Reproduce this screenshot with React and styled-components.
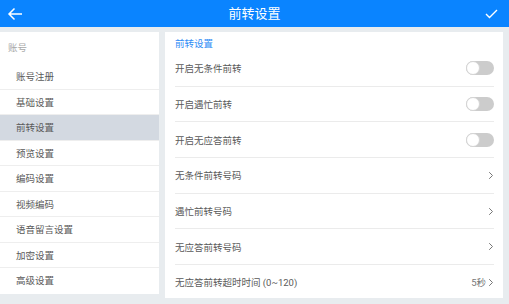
import React from "react"
import styled, { createGlobalStyle } from "styled-components"

const GlobalStyle = createGlobalStyle`
  html, body {
    margin: 0;
    padding: 0;
    background: #e8ecef;
    font-family: Roboto, "Noto Sans CJK SC", "Noto Sans", sans-serif;
  }
`

const Page = styled.div`
  width: 509px;
  height: 304px;
  display: flex;
  flex-direction: column;
  background: #e8ecef;
  overflow: hidden;
`

const TopBar = styled.div`
  height: 27px;
  flex: none;
  background: #0a84ff;
  display: flex;
  align-items: center;
  justify-content: space-between;
  padding: 0 11px 0 7px;
  color: #fff;
  position: relative;
`

const Title = styled.div`
  position: absolute;
  left: 0;
  right: 0;
  text-align: center;
  font-size: 13px;
  line-height: 27px;
  pointer-events: none;
`

const Body = styled.div`
  display: flex;
  gap: 6px;
  padding: 5px 6px 0 0;
  align-items: flex-start;
`

const Sidebar = styled.div`
  width: 159px;
  height: 261.5px;
  background: #fff;
  flex: none;
`

const GroupLabel = styled.div`
  height: 32px;
  line-height: 32px;
  padding-left: 8px;
  font-size: 9.5px;
  color: #a8a8a8;
`

const NavItem = styled.div`
  height: 25.5px;
  box-sizing: border-box;
  border-bottom: 1px solid ${(p) => (p.$last ? "transparent" : "#eeeeee")};
  background: ${(p) => (p.$active ? "#d3d9e1" : "#fff")};
  padding-left: 16px;
  display: flex;
  align-items: center;
  font-size: 9.5px;
  color: #5a5a5a;
`

const Panel = styled.div`
  flex: 1;
  height: 266px;
  background: #fff;
  padding: 0 9px 0 10px;
  overflow: hidden;
`

const SectionTitle = styled.div`
  height: 19px;
  padding-top: 6px;
  box-sizing: border-box;
  font-size: 9.5px;
  line-height: 12px;
  color: #2f8cf5;
`

const Row = styled.div`
  height: 35.7px;
  box-sizing: border-box;
  border-bottom: 1px solid ${(p) => (p.$last ? "transparent" : "#ebebeb")};
  display: flex;
  align-items: center;
  justify-content: space-between;
  font-size: 9.5px;
  color: #5a5a5a;
`

const RowEnd = styled.div`
  display: flex;
  align-items: center;
  gap: 2px;
  color: #777;
  font-size: 9.5px;
`

const Toggle = styled.div`
  width: 28px;
  height: 14px;
  border-radius: 7px;
  background: #cccccc;
  position: relative;
  &::after {
    content: "";
    position: absolute;
    left: 0;
    top: 0;
    width: 14px;
    height: 14px;
    box-sizing: border-box;
    border-radius: 50%;
    background: #fff;
    border: 1px solid #d4d4d4;
  }
`

const Chevron = () => (
  <svg width="6" height="9" viewBox="0 0 6 9">
    <path d="M1.2 1.2 L4.5 4.5 L1.2 7.8" fill="none" stroke="#777" strokeWidth="1" />
  </svg>
)

const navItems = [
  "账号注册",
  "基础设置",
  "前转设置",
  "预览设置",
  "编码设置",
  "视频编码",
  "语音留言设置",
  "加密设置",
  "高级设置",
]

const rows = [
  { label: "开启无条件前转", type: "toggle" },
  { label: "开启遇忙前转", type: "toggle" },
  { label: "开启无应答前转", type: "toggle" },
  { label: "无条件前转号码", type: "link" },
  { label: "遇忙前转号码", type: "link" },
  { label: "无应答前转号码", type: "link" },
  { label: "无应答前转超时时间 (0~120)", type: "link", value: "5秒" },
]

export default function App() {
  return (
    <>
      <GlobalStyle />
      <Page>
        <TopBar>
          <svg width="16" height="14" viewBox="0 0 16 14">
            <path d="M15 7 H2 M7.5 1.5 L2 7 L7.5 12.5" fill="none" stroke="#fff" strokeWidth="1.5" />
          </svg>
          <Title>前转设置</Title>
          <svg width="13" height="10" viewBox="0 0 13 10">
            <path d="M1 5 L4.5 8.5 L12 1" fill="none" stroke="#fff" strokeWidth="1.4" />
          </svg>
        </TopBar>
        <Body>
          <Sidebar>
            <GroupLabel>账号</GroupLabel>
            {navItems.map((name, i) => (
              <NavItem key={name} $active={name === "前转设置"} $last={i === navItems.length - 1}>
                {name}
              </NavItem>
            ))}
          </Sidebar>
          <Panel>
            <SectionTitle>前转设置</SectionTitle>
            {rows.map((r, i) => (
              <Row key={r.label} $last={i === rows.length - 1}>
                <span>{r.label}</span>
                {r.type === "toggle" ? (
                  <Toggle />
                ) : (
                  <RowEnd>
                    {r.value}
                    <Chevron />
                  </RowEnd>
                )}
              </Row>
            ))}
          </Panel>
        </Body>
      </Page>
    </>
  )
}
